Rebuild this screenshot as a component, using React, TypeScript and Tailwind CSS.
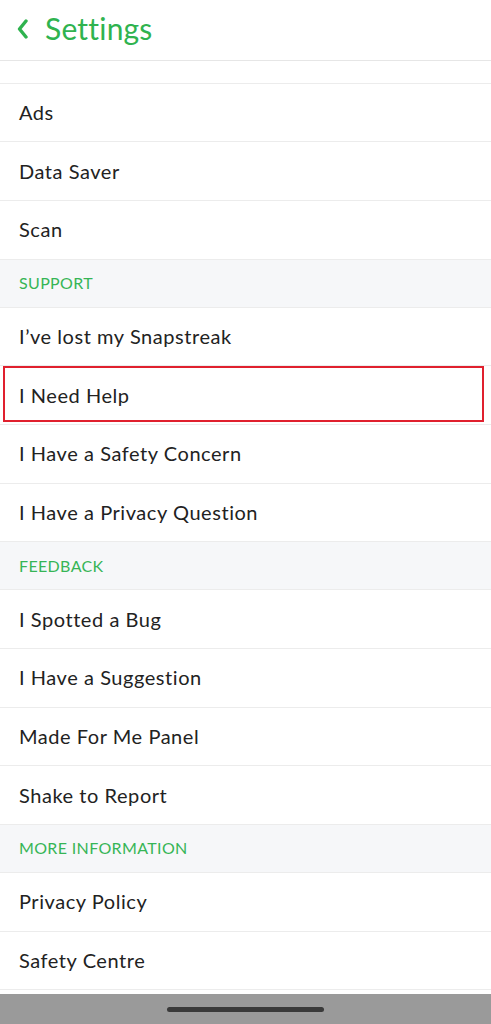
import React from 'react';

type Section = {
  readonly title: string;
  readonly items: readonly string[];
};

const SECTIONS: readonly Section[] = [
  { title: 'SUPPORT', items: ['I’ve lost my Snapstreak', 'I Need Help', 'I Have a Safety Concern', 'I Have a Privacy Question'] },
  { title: 'FEEDBACK', items: ['I Spotted a Bug', 'I Have a Suggestion', 'Made For Me Panel', 'Shake to Report'] },
  { title: 'MORE INFORMATION', items: ['Privacy Policy', 'Safety Centre'] },
];

const FONT = "font-['Lato','Noto_Sans',sans-serif]";

function Row({ label, highlighted }: { label: string; highlighted?: boolean }) {
  return (
    <div className="relative flex h-[58.67px] items-center border-b border-[#ececec] bg-white px-[19px]">
      <span className="mt-[-1px] text-[20px] leading-none tracking-[0.55px] text-[#222]">{label}</span>
      {/* Annotation box */}
      {highlighted && (
        <div className="pointer-events-none absolute left-[3px] right-[7px] top-0 bottom-[2px] border-2 border-[#e0202e]" />
      )}
    </div>
  );
}

function SectionHeader({ title }: { title: string }) {
  return (
    <div className="flex h-[48px] items-center border-b border-[#ececec] bg-[#f6f7f9] px-[19px]">
      <span className="text-[16px] leading-none tracking-[0.35px] text-[#36b556]">{title}</span>
    </div>
  );
}

export default function App() {
  return (
    <div className={`flex h-[1024px] w-[491px] flex-col overflow-hidden bg-white ${FONT}`}>
      {/* Nav bar */}
      <div className="flex h-[61px] shrink-0 items-center gap-[17px] border-b border-[#e6e6e6] pl-[17px]">
        <svg width="11" height="20" viewBox="0 0 11 20" fill="none" className="mt-[-2px]">
          <polyline
            points="9,2 2.5,10 9,18"
            stroke="#2fb34f"
            strokeWidth="3.4"
            strokeLinecap="round"
            strokeLinejoin="round"
          />
        </svg>
        <span className="mt-[-4px] text-[30px] leading-none tracking-[0.2px] text-[#2fb34f]">Settings</span>
      </div>

      <div className="flex-1 overflow-hidden">
        {/* Partly scrolled-off row */}
        <div className="h-[22.67px] overflow-hidden border-b border-[#ececec]">
          <div className="-mt-[40px] flex h-[58.67px] items-center px-[19px]">
            <span className="text-[20px] leading-none tracking-[0.55px] text-[#222]">Bitmoji Privacy</span>
          </div>
        </div>

        <Row label="Ads" />
        <Row label="Data Saver" />
        <Row label="Scan" />

        {SECTIONS.map((section) => (
          <div key={section.title}>
            <SectionHeader title={section.title} />
            {section.items.map((item) => (
              <Row key={item} label={item} highlighted={item === 'I Need Help'} />
            ))}
          </div>
        ))}

        <div className="h-[20px] bg-white" />
      </div>

      {/* Home indicator bar */}
      <div className="flex h-[30px] shrink-0 items-center justify-center bg-[#9a9a9a]">
        <div className="h-[5px] w-[157px] rounded-full bg-[#3a3a3a]" />
      </div>
    </div>
  );
}
